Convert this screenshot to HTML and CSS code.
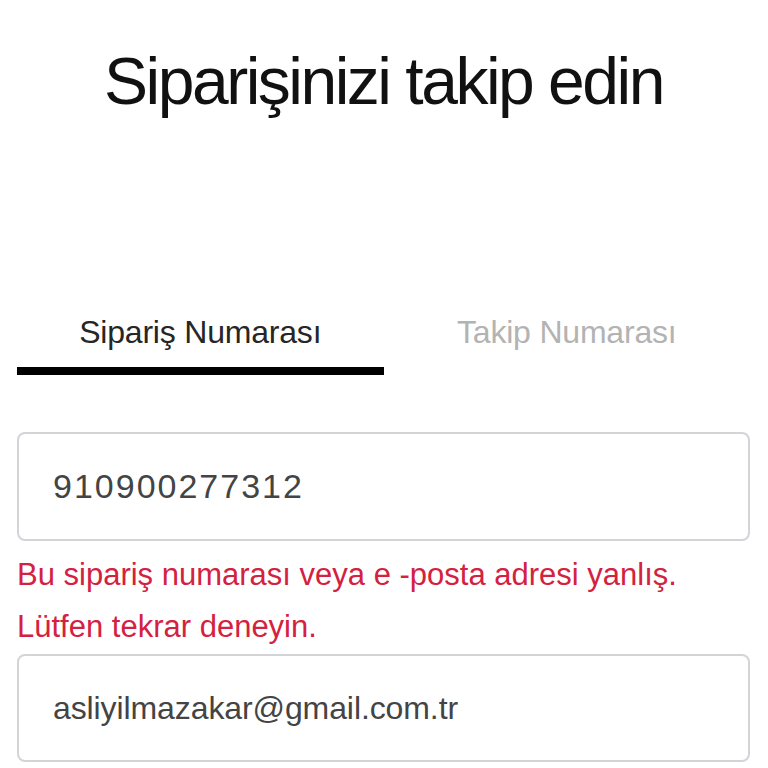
FILE: index.html
```html
<!DOCTYPE html>
<html lang="tr">
<head>
<meta charset="utf-8">
<title>Siparişinizi takip edin</title>
<link rel="stylesheet" href="styles.css">
</head>
<body>
<main class="page">
  <h1 class="title">Siparişinizi takip edin</h1>
  <div class="tabs">
    <div class="tab tab-active">Sipariş Numarası</div>
    <div class="tab">Takip Numarası</div>
  </div>
  <form class="form">
    <input class="field field-number" type="text" value="910900277312">
    <p class="error">Bu sipariş numarası veya e -posta adresi yanlış.<br>Lütfen tekrar deneyin.</p>
    <input class="field field-email" type="text" value="asliyilmazakar@gmail.com.tr">
  </form>
</main>
</body>
</html>
```
FILE: styles.css
```css
html, body {
  margin: 0;
  padding: 0;
  background: #ffffff;
}

body {
  font-family: "Liberation Sans", Arial, sans-serif;
  color: #1a1a1a;
}

.page {
  padding: 48px 18px 0 17px;
}

.title {
  margin: 0;
  font-size: 66px;
  line-height: 66px;
  font-weight: 400;
  letter-spacing: -2.5px;
  text-align: center;
  color: #111111;
}

.tabs {
  display: flex;
  margin-top: 198px;
}

.tab {
  flex: 1 1 0;
  text-align: center;
  font-size: 32px;
  line-height: 40px;
  padding-bottom: 15px;
  border-bottom: 8px solid transparent;
  color: #b3b3b3;
  letter-spacing: -0.2px;
}

.tab-active {
  color: #262626;
  border-bottom-color: #000000;
}

.form {
  display: flex;
  flex-direction: column;
  margin-top: 57px;
}

.field {
  display: block;
  box-sizing: border-box;
  width: 100%;
  margin: 0;
  border: 2px solid #d2d4d7;
  border-radius: 8px;
  padding: 0 20px 0 34px;
  font-family: "Liberation Sans", Arial, sans-serif;
  color: #444444;
  background: #ffffff;
  outline: none;
}

.field-number {
  height: 109px;
  font-size: 34px;
  letter-spacing: 2px;
}

.field-email {
  height: 108px;
  font-size: 32px;
  letter-spacing: -0.1px;
  margin-top: 1px;
}

.error {
  margin: 8px 0 0 0;
  font-size: 31px;
  line-height: 52px;
  color: #d3213f;
}
```
